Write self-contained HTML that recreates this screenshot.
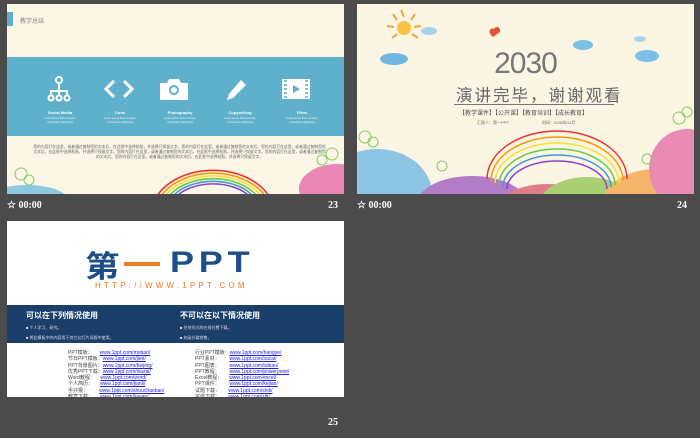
<!DOCTYPE html>
<html><head><meta charset="utf-8"><style>
*{margin:0;padding:0;box-sizing:border-box}
body{width:700px;height:438px;background:#4b4b4b;position:relative;overflow:hidden;font-family:"Liberation Sans","Noto Sans CJK SC",sans-serif}
.s{position:absolute;overflow:hidden}
.ft{position:absolute;color:#fff;font:bold 10px "Liberation Serif",serif}
.lab{position:absolute;top:106px;width:60px;text-align:center;color:#fff;font-size:4px;font-weight:bold}
.sub{position:absolute;top:113px;width:60px;text-align:center;color:#e8f4f8;font-size:2.6px;line-height:3.5px}
.lk{position:absolute;font-size:5px;line-height:6.3px;color:#444;white-space:pre}
.lk u{color:#2222dd}
</style></head><body>
<!-- slide 1 -->
<div class="s" style="left:7px;top:4px;width:337px;height:190px;background:#fbf6e6">
 <div style="position:absolute;left:0;top:8px;width:6px;height:14px;background:#5eb0cb"></div>
 <div style="position:absolute;left:13px;top:12px;font-size:6px;color:#888">教学总结</div>
 <div style="position:absolute;left:0;top:53px;width:337px;height:79px;background:#5eb0cb"></div>
 <svg style="position:absolute;left:40px;top:72px" width="24" height="26" viewBox="0 0 24 26" fill="none" stroke="#fff" stroke-width="2"><circle cx="12" cy="4" r="3"/><path d="M12 7v8M4 20v-5h16v5M12 15v5"/><circle cx="4" cy="22" r="2.5"/><circle cx="12" cy="22" r="2.5"/><circle cx="20" cy="22" r="2.5"/></svg>
 <svg style="position:absolute;left:96px;top:75px" width="32" height="20" viewBox="0 0 32 20" fill="none" stroke="#fff" stroke-width="3"><path d="M11 2L3 10l8 8M21 2l8 8-8 8"/></svg>
 <svg style="position:absolute;left:153px;top:74px" width="28" height="22" viewBox="0 0 28 22"><path d="M0 5h7l2-4h10l2 4h7v17H0z" fill="#fff"/><circle cx="14" cy="12" r="5" fill="#5eb0cb"/><circle cx="14" cy="12" r="3" fill="#fff"/></svg>
 <svg style="position:absolute;left:218px;top:75px" width="22" height="22" viewBox="0 0 22 22"><path d="M16 1l5 5L8 19 2 21l2-6z" fill="#fff"/></svg>
 <svg style="position:absolute;left:275px;top:75px" width="28" height="20" viewBox="0 0 28 20"><rect width="28" height="20" fill="#fff"/><path d="M11 6v8l7-4z" fill="#5eb0cb"/><path d="M2 2h3M2 6h3M2 10h3M2 14h3M2 18h3M23 2h3M23 6h3M23 10h3M23 14h3M23 18h3" stroke="#5eb0cb" stroke-width="1.5"/></svg>
 <div class="lab" style="left:23px">Social Media</div><div class="sub" style="left:23px">Lorem ipsum dolor sit amet,<br>consectetur adipiscing</div>
 <div class="lab" style="left:83px">Code</div><div class="sub" style="left:83px">Lorem ipsum dolor sit amet,<br>consectetur adipiscing</div>
 <div class="lab" style="left:143px">Photography</div><div class="sub" style="left:143px">Lorem ipsum dolor sit amet,<br>consectetur adipiscing</div>
 <div class="lab" style="left:203px">Copywriting</div><div class="sub" style="left:203px">Lorem ipsum dolor sit amet,<br>consectetur adipiscing</div>
 <div class="lab" style="left:265px">Films</div><div class="sub" style="left:265px">Lorem ipsum dolor sit amet,<br>consectetur adipiscing</div>
 <div style="position:absolute;left:25px;top:141px;width:295px;font-size:3.8px;line-height:5.2px;color:#666;text-align:center">您的内容打在这里，或者通过复制您的文本后，在此框中选择粘贴，并选择只保留文字。您的内容打在这里，或者通过复制您的文本后。您的内容打在这里，或者通过复制您的文本后，在此框中选择粘贴，并选择只保留文字。您的内容打在这里，或者通过复制您的文本后，在此框中选择粘贴，并选择只保留文字。您的内容打在这里，或者通过复制您的文本后。您的内容打在这里，或者通过复制您的文本后，在此框中选择粘贴，并选择只保留文字。</div>
 <svg style="position:absolute;left:0;top:0" width="337" height="190">
  <g fill="none" stroke-width="1.6"><path d="M150 192a62 45 0 0 1 112 0" stroke="#e33"/><path d="M154 192a58 41 0 0 1 104 0" stroke="#f90"/><path d="M158 192a54 37 0 0 1 96 0" stroke="#fd3"/><path d="M162 192a50 33 0 0 1 88 0" stroke="#6c4"/><path d="M166 192a46 29 0 0 1 80 0" stroke="#49d"/><path d="M170 192a42 25 0 0 1 72 0" stroke="#84c"/></g>
  <ellipse cx="20" cy="195" rx="40" ry="14" fill="#8cc8e0"/><ellipse cx="330" cy="185" rx="38" ry="25" fill="#e986b4"/>
  <g fill="none" stroke="#8c6" stroke-width="1"><circle cx="14" cy="170" r="6"/><circle cx="22" cy="176" r="5"/><circle cx="325" cy="150" r="6"/><circle cx="315" cy="156" r="5"/></g>
 </svg>
</div>
<div class="ft" style="left:7px;top:200px">☆ 00:00</div><div class="ft" style="left:328px;top:200px">23</div>
<!-- slide 2 -->
<div class="s" style="left:357px;top:4px;width:337px;height:190px;background:#fbf5e3">
 <svg style="position:absolute;left:0;top:0" width="337" height="190">
  <g stroke="#f4a33a" stroke-width="2"><path d="M47 13l-3-7M54 16l4-6M57 23l7-1M55 30l6 4M40 30l-5 4M37 23l-7-1M40 16l-4-6"/></g><circle cx="47" cy="24" r="7" fill="#f8c446"/>
  <ellipse cx="37" cy="55" rx="14" ry="6" fill="#6fb6e0"/><ellipse cx="72" cy="27" rx="8" ry="4" fill="#a6d4ea"/><ellipse cx="226" cy="41" rx="10" ry="5" fill="#7cc0e6"/><ellipse cx="290" cy="52" rx="12" ry="6" fill="#7cc0e6"/><ellipse cx="283" cy="35" rx="6" ry="3" fill="#a6d4ea"/>
  <path d="M136 33c-6-5-3-10 1-8 1-3 7-3 6 3z" fill="#e5542e"/>
  <ellipse cx="20" cy="190" rx="55" ry="45" fill="#8cc6e4"/><ellipse cx="115" cy="200" rx="55" ry="28" fill="#b37cc8"/><ellipse cx="190" cy="200" rx="45" ry="20" fill="#e07c88"/><ellipse cx="230" cy="205" rx="50" ry="32" fill="#a9d070"/><ellipse cx="300" cy="200" rx="55" ry="35" fill="#f6b66a"/><ellipse cx="330" cy="165" rx="38" ry="40" fill="#e88ab2"/>
  <g fill="none" stroke-width="1.5"><path d="M130 175a70 48 0 0 1 140 0" stroke="#e33"/><path d="M134 177a66 44 0 0 1 132 0" stroke="#f90"/><path d="M138 179a62 40 0 0 1 124 0" stroke="#fd3"/><path d="M142 181a58 36 0 0 1 116 0" stroke="#6c4"/><path d="M146 183a54 32 0 0 1 108 0" stroke="#49d"/><path d="M150 185a50 28 0 0 1 100 0" stroke="#84c"/></g>
  <g fill="none" stroke="#8c6" stroke-width="1"><circle cx="8" cy="133" r="6"/><circle cx="16" cy="138" r="5"/><circle cx="322" cy="114" r="6"/><circle cx="330" cy="108" r="5"/><circle cx="85" cy="162" r="5"/><circle cx="290" cy="155" r="5"/></g>
 </svg>
 <div style="position:absolute;left:0;width:337px;top:43px;text-align:center;font-size:30px;color:#777;letter-spacing:-1px">2030</div>
 <div style="position:absolute;left:99px;top:78px;font-size:16.5px;color:#666;letter-spacing:2px">演讲完毕，谢谢观看</div>
 <div style="position:absolute;left:97px;top:100px;width:160px;height:1px;background:#777"></div>
 <div style="position:absolute;left:102px;top:104px;font-size:6px;color:#555">【教学课件】【公开课】【教育培训】【成长教育】</div>
 <div style="position:absolute;left:120px;top:116px;font-size:4px;color:#666">汇报人：第一PPT</div>
 <div style="position:absolute;left:185px;top:116px;font-size:4px;color:#666">时间：2030年12月</div>
</div>
<div class="ft" style="left:357px;top:200px">☆ 00:00</div><div class="ft" style="left:677px;top:200px">24</div>
<!-- slide 3 -->
<div class="s" style="left:7px;top:221px;width:337px;height:176px;background:#fff">
 <div style="position:absolute;left:78px;top:26px;font:bold 30px 'Noto Sans CJK SC',sans-serif;color:#1c4e8a;line-height:34px;transform:scaleX(1.15);transform-origin:left">第</div>
 <div style="position:absolute;left:117px;top:41px;width:36px;height:4px;background:#f07a22"></div>
 <div style="position:absolute;left:163px;top:25px;font:bold 30px 'Liberation Sans',sans-serif;color:#1c4e8a;line-height:34px;letter-spacing:4px;transform:scaleX(1.2);transform-origin:left">PPT</div>
 <div style="position:absolute;left:88px;top:60px;font-size:8px;color:#f07a22;letter-spacing:3.2px">HTTP://WWW.1PPT.COM</div>
 <div style="position:absolute;left:0;top:84px;width:337px;height:38px;background:#1a3f6b"></div>
 <div style="position:absolute;left:19px;top:89px;font-size:8px;font-weight:bold;color:#fff">可以在下列情况使用</div>
 <div style="position:absolute;left:173px;top:89px;font-size:8px;font-weight:bold;color:#fff">不可以在以下情况使用</div>
 <div style="position:absolute;left:19px;top:102px;font-size:4px;color:#dde;line-height:10px">■ 个人学习、研究。<br>■ 将此模板中的内容用于其它幻灯片母版中使用。</div>
 <div style="position:absolute;left:173px;top:102px;font-size:4px;color:#dde;line-height:10px">■ 任何形式的在线付费下载。<br>■ 刻录光碟销售。</div>
 <div class="lk" style="left:61px;top:129px">PPT模板：     <u>www.1ppt.com/moban/</u>
节日PPT模板：<u>www.1ppt.com/jieri/</u>
PPT背景图片：<u>www.1ppt.com/beijing/</u>
优秀PPT下载：<u>www.1ppt.com/xiazai/</u>
Word教程：    <u>www.1ppt.com/word/</u>
个人简历：     <u>www.1ppt.com/jianli/</u>
手抄报：        <u>www.1ppt.com/shouchaobao/</u>
教案下载：     <u>www.1ppt.com/jiaoan/</u></div>
 <div class="lk" style="left:188px;top:129px">行业PPT模板：<u>www.1ppt.com/hangye/</u>
PPT素材：       <u>www.1ppt.com/sucai/</u>
PPT图表：       <u>www.1ppt.com/tubiao/</u>
PPT教程：       <u>www.1ppt.com/powerpoint/</u>
Excel教程：     <u>www.1ppt.com/excel/</u>
PPT课件：       <u>www.1ppt.com/kejian/</u>
试题下载：      <u>www.1ppt.com/shiti/</u>
字体下载：      <u>www.1ppt.com/ziti/</u></div>
</div>
<div class="ft" style="left:328px;top:417px">25</div>
</body></html>
